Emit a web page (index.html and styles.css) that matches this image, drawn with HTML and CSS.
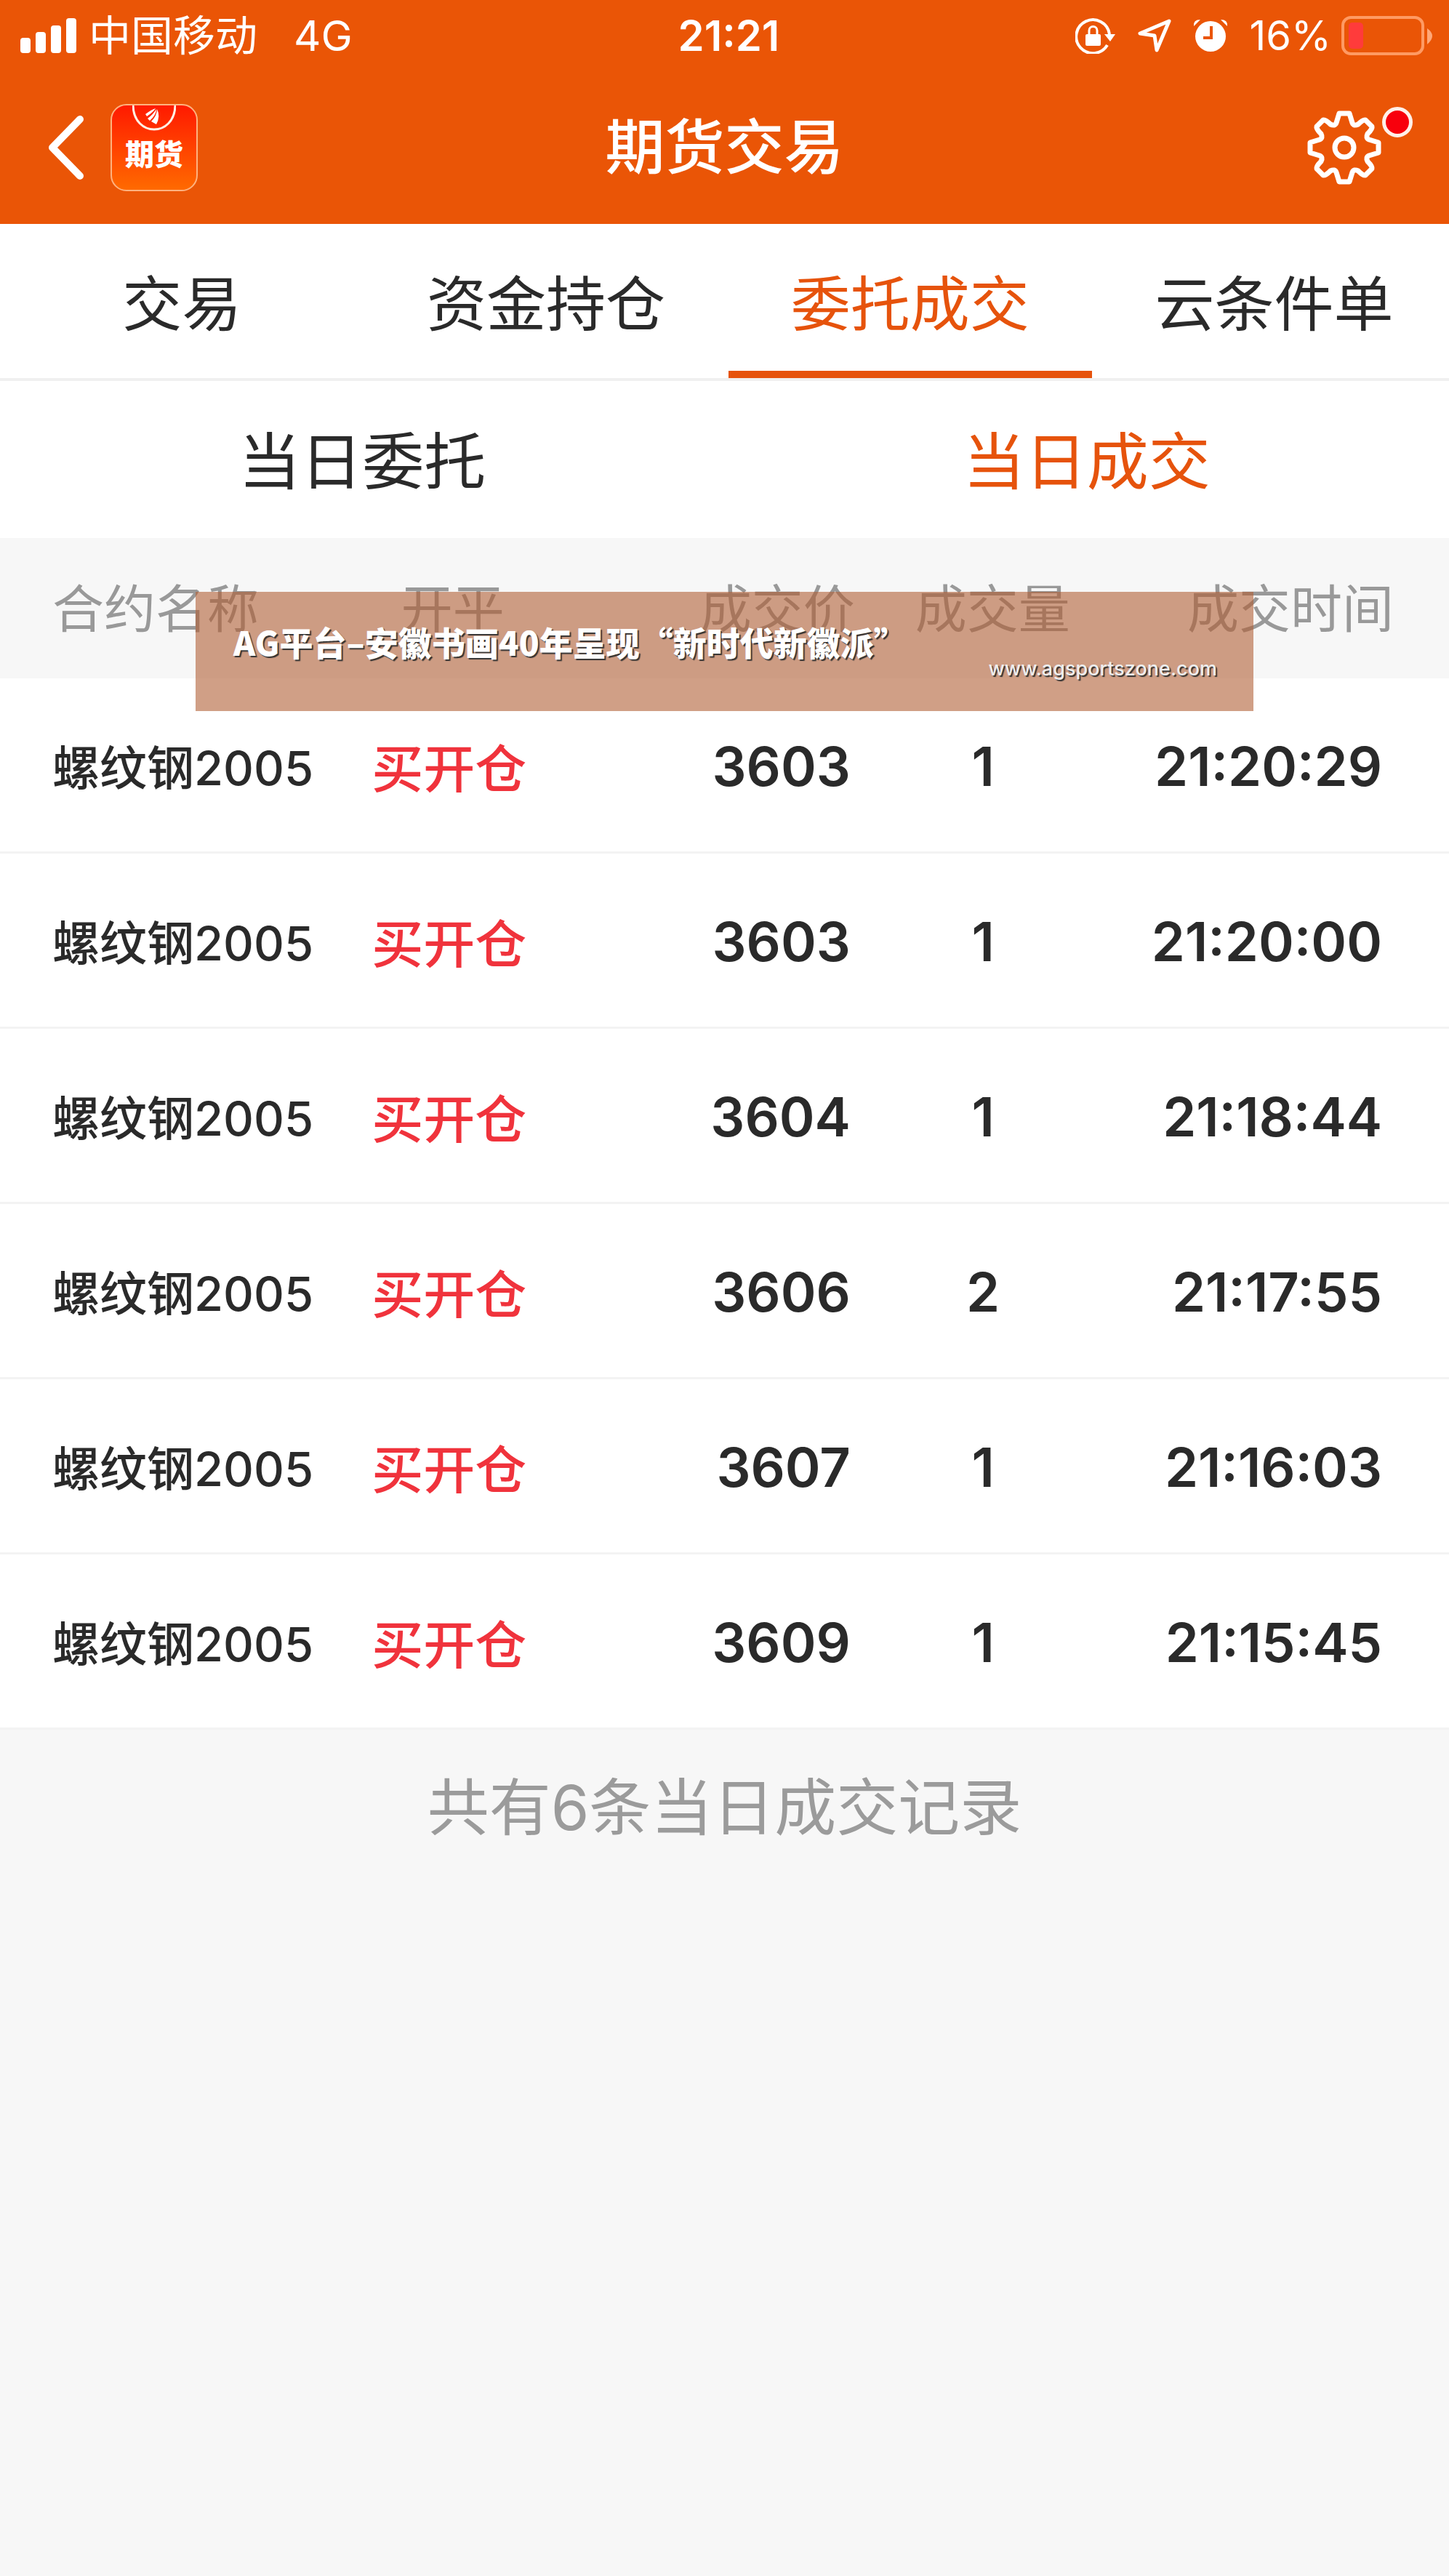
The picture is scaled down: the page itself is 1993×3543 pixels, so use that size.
FILE: index.html
```html
<!DOCTYPE html>
<html lang="zh-CN">
<head>
    <meta charset="UTF-8">
    <meta name="viewport" content="width=device-width, initial-scale=1.0">
    <title>期货交易</title>
    <link rel="stylesheet" href="styles.css">
</head>
<body>
    <header class="header">
        <!-- Status bar -->
        <div class="status-bar">
            <div class="status-left">
                <svg class="signal" width="78" height="48" viewBox="0 0 78 48" fill="#fff">
                    <rect x="0" y="27" width="14" height="21" rx="4"/>
                    <rect x="21" y="19" width="14" height="29" rx="4"/>
                    <rect x="42" y="10" width="14" height="38" rx="4"/>
                    <rect x="63" y="0" width="14" height="48" rx="4"/>
                </svg>
                <span>中国移动</span>
                <span class="network">4G</span>
            </div>
            <span class="clock">21:21</span>
            <div class="status-right">
                <svg width="56" height="50" viewBox="0 0 56 50">
                    <path d="M44 38A23 23 0 1 1 47 23" fill="none" stroke="#fff" stroke-width="4"/>
                    <path d="M40 23h15l-7 10z" fill="#fff"/>
                    <rect x="14" y="23" width="21" height="16" rx="2" fill="#fff"/>
                    <path d="M19 24v-6a5 5 0 0 1 11 0v6" fill="none" stroke="#fff" stroke-width="3"/>
                </svg>
                <svg class="icon-arrow" width="46" height="46" viewBox="0 0 46 46">
                    <path d="M43 3L3 20l20 3 3 20z" fill="none" stroke="#fff" stroke-width="5" stroke-linejoin="round"/>
                </svg>
                <svg class="icon-alarm" width="48" height="48" viewBox="0 0 48 48">
                    <circle cx="24" cy="25" r="21" fill="#fff"/>
                    <path d="M1 11q-1-9 9-9zM47 11q1-9-9-9z" fill="#fff"/>
                    <path d="M25 11v16H14" fill="none" stroke="#ea5506" stroke-width="4"/>
                </svg>
                <span class="battery-text">16%</span>
                <svg width="126" height="56" viewBox="0 0 126 56">
                    <rect x="2" y="3" width="110" height="50" rx="11" fill="none" stroke="#ff9a63" stroke-width="4"/>
                    <rect x="10" y="10" width="20" height="36" rx="5" fill="#ff3b3b"/>
                    <path d="M118 18q14 10 0 22z" fill="#ffa878"/>
                </svg>
            </div>
        </div>

        <!-- Title bar -->
        <div class="title-bar">
            <div class="title-left">
                <button type="button" class="icon-button" aria-label="返回">
                    <svg width="50" height="88" viewBox="0 0 50 88">
                        <path d="M44 5L6 44l38 39" fill="none" stroke="#fff" stroke-width="10" stroke-linecap="round" stroke-linejoin="round"/>
                    </svg>
                </button>
                <a href="#" class="app-logo">
                    <svg width="60" height="36" viewBox="0 0 60 36">
                        <path d="M1 0C2 44 58 44 59 0" fill="none" stroke="#fff0e4" stroke-width="3"/>
                        <path d="M18 12q8-6 14-8-3 5-12 11zM21 18q8-6 12-13 0 8-9 16zM26 22q8-8 8-17 5 10-1 21z" fill="#fff"/>
                    </svg>
                    <span>期货</span>
                </a>
            </div>
            <h1>期货交易</h1>
            <div class="title-right">
                <button type="button" class="icon-button" aria-label="设置">
                    <svg width="104" height="104" viewBox="-52 -52 104 104" fill="none" stroke="#fff" stroke-width="7" stroke-linejoin="round">
                        <path d="M-7-47H7L11-34Q13-29 19-32Q26-39 29-38L38-29Q39-26 32-19Q29-13 34-11L47-7V7L34 11Q29 13 32 19Q39 26 38 29L29 38Q26 39 19 32Q13 29 11 34L7 47H-7L-11 34Q-13 29-19 32Q-26 39-29 38L-38 29Q-39 26-32 19Q-29 13-34 11L-47 7V-7L-34-11Q-29-13-32-19Q-39-26-38-29L-29-38Q-26-39-19-32Q-13-29-11-34Z"/>
                        <circle r="13"/>
                    </svg>
                    <span class="badge"></span>
                </button>
            </div>
        </div>
    </header>

    <nav class="tabs">
        <button type="button">交易</button>
        <button type="button">资金持仓</button>
        <button type="button" class="active">委托成交</button>
        <button type="button">云条件单</button>
    </nav>

    <nav class="sub-tabs">
        <button type="button">当日委托</button>
        <button type="button" class="active">当日成交</button>
    </nav>

    <main class="records">
        <table>
            <thead>
                <tr>
                    <th class="name">合约名称</th>
                    <th class="side">开平</th>
                    <th class="price">成交价</th>
                    <th class="volume">成交量</th>
                    <th class="time">成交时间</th>
                </tr>
            </thead>
            <tbody>
                <tr>
                    <td class="name">螺纹钢2005</td>
                    <td class="side">买开仓</td>
                    <td class="price">3603</td>
                    <td class="volume">1</td>
                    <td class="time">21:20:29</td>
                </tr>
                <tr>
                    <td class="name">螺纹钢2005</td>
                    <td class="side">买开仓</td>
                    <td class="price">3603</td>
                    <td class="volume">1</td>
                    <td class="time">21:20:00</td>
                </tr>
                <tr>
                    <td class="name">螺纹钢2005</td>
                    <td class="side">买开仓</td>
                    <td class="price">3604</td>
                    <td class="volume">1</td>
                    <td class="time">21:18:44</td>
                </tr>
                <tr>
                    <td class="name">螺纹钢2005</td>
                    <td class="side">买开仓</td>
                    <td class="price">3606</td>
                    <td class="volume">2</td>
                    <td class="time">21:17:55</td>
                </tr>
                <tr>
                    <td class="name">螺纹钢2005</td>
                    <td class="side">买开仓</td>
                    <td class="price">3607</td>
                    <td class="volume">1</td>
                    <td class="time">21:16:03</td>
                </tr>
                <tr>
                    <td class="name">螺纹钢2005</td>
                    <td class="side">买开仓</td>
                    <td class="price">3609</td>
                    <td class="volume">1</td>
                    <td class="time">21:15:45</td>
                </tr>
            </tbody>
        </table>

        <!-- Banner laid over the table head -->
        <div class="banner">
            <p class="banner-title">AG平台–安徽书画40年呈现“新时代新徽派”</p>
            <p class="banner-site">www.agsportszone.com</p>
        </div>

        <p class="summary">共有6条当日成交记录</p>
    </main>
</body>
</html>
```

FILE: styles.css
```css
* {
    box-sizing: border-box;
}

body {
    margin: 0;
    min-height: 100vh;
    overflow-x: hidden;
    font-family: Inter, "Noto Sans CJK SC", sans-serif;
    color: #2a2a2a;
    background: #f7f7f7;
}

button {
    padding: 0;
    border: none;
    background: none;
    font-family: inherit;
    color: inherit;
    cursor: pointer;
}

svg {
    display: block;
}

h1, p {
    margin: 0;
}

/* Header */
.header {
    color: #fff;
    background: #ea5506;
}

.status-bar, .title-bar {
    display: grid;
    grid-template-columns: 1fr auto 1fr;
    align-items: center;
}

.status-bar {
    height: 98px;
    padding: 0 22px 0 28px;
    font-size: 58px;
    line-height: 98px;
}

.status-left, .status-right, .title-left, .title-right {
    display: flex;
    align-items: center;
}

.status-right, .title-right {
    justify-content: flex-end;
}

.signal {
    margin-right: 16px;
}

.network {
    margin-left: 50px;
}

.clock {
    padding-left: 6px;
    font-weight: 600;
}

.icon-arrow {
    margin-left: 30px;
}

.icon-alarm {
    margin-left: 30px;
}

.battery-text {
    margin: 0 14px 0 30px;
    font-size: 56px;
}

.title-bar {
    height: 210px;
    padding: 0 66px;
}

.title-bar h1 {
    font-size: 82px;
    font-weight: 500;
    line-height: 120px;
}

.title-right {
    padding-right: 26px;
}

.icon-button {
    position: relative;
}

.app-logo {
    display: flex;
    flex-direction: column;
    align-items: center;
    width: 120px;
    height: 120px;
    margin-left: 36px;
    border: 2px solid #ffb27f;
    border-radius: 22px;
    background: linear-gradient(#ff1a00, #ff6a00);
    font-size: 40px;
    font-weight: 900;
    line-height: 64px;
    color: #fff;
    text-decoration: none;
}

.badge {
    position: absolute;
    top: -4px;
    right: -42px;
    width: 42px;
    height: 42px;
    border: 5px solid #fff0e8;
    border-radius: 50%;
    background: #f8000c;
}

/* Tabs */
.tabs, .sub-tabs {
    display: flex;
    background: #fff;
}

.tabs {
    width: calc(100% + 10px);
    height: 216px;
    border-bottom: 4px solid #f0f0f0;
}

.tabs button, .sub-tabs button {
    flex: 1;
}

.tabs button {
    padding-top: 6px;
    border-bottom: 10px solid transparent;
    font-size: 82px;
}

.tabs .active {
    border-color: #e6530c;
}

.sub-tabs {
    height: 216px;
}

.sub-tabs button {
    padding-bottom: 8px;
    font-size: 85px;
}

.tabs .active, .sub-tabs .active {
    color: #e6530c;
}

/* Records */
.records {
    position: relative;
}

table {
    width: 100%;
    table-layout: fixed;
    border-collapse: separate;
    border-spacing: 0;
}

th, td {
    padding: 0;
    text-align: center;
}

th {
    height: 193px;
    font-size: 71px;
    font-weight: 400;
    line-height: 84px;
    color: #999;
}

td {
    height: 241px;
    padding-top: 4px;
    border-bottom: 3px solid #f3f3f3;
    background: #fff;
    font-size: 74px;
    font-weight: 600;
}

.name {
    width: 24%;
    padding-left: 72px;
    text-align: left;
    white-space: nowrap;
}

td.name {
    padding-top: 0;
    font-size: 65px;
    font-weight: 500;
}

.side {
    width: 14%;
}

th.side {
    padding-left: 10px;
}

td.side {
    padding-top: 0;
    font-size: 71px;
    font-weight: 500;
    color: #f0333c;
}

.price {
    width: 21%;
    text-align: right;
}

td.price {
    padding-right: 6px;
}

.volume {
    width: 19%;
}

td.volume {
    padding-right: 26px;
}

.time {
    padding-right: 76px;
    text-align: right;
}

td.time {
    padding-right: 92px;
}

.summary {
    padding-top: 44px;
    font-size: 85px;
    line-height: 128px;
    text-align: center;
    color: #9b9b9b;
}

.banner {
    position: absolute;
    top: 74px;
    left: 13.5%;
    right: 13.5%;
    height: 164px;
    padding: 40px 50px 0 52px;
    background: rgba(177, 95, 54, 0.6);
    color: #fff;
    text-shadow: 2px 2px 1px #333;
}

.banner-title {
    font-family: "Noto Sans CJK SC", sans-serif;
    font-size: 46px;
    font-weight: 900;
    line-height: 56px;
}

.banner-site {
    font-size: 27px;
    font-weight: 500;
    line-height: 20px;
    text-align: right;
    color: #eee;
}
```
